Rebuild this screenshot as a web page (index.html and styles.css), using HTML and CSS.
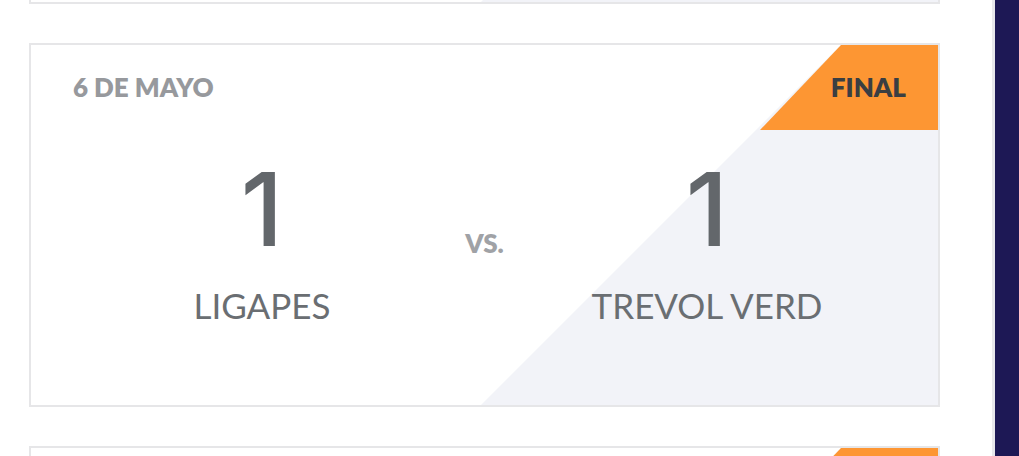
FILE: index.html
```html
<!DOCTYPE html>
<html lang="es">
<head>
<meta charset="utf-8">
<title>Resultados</title>
<link rel="stylesheet" href="styles.css">
</head>
<body>
<div class="page">
  <main class="feed">
    <div class="list">
      <article class="card">
        <div class="badge"><span>FINAL</span></div>
        <div class="date">5 de mayo</div>
        <div class="score">
          <div class="team"><div class="goals">2</div><div class="name">Equipo A</div></div>
          <div class="vs">vs.</div>
          <div class="team"><div class="goals">0</div><div class="name">Equipo B</div></div>
        </div>
      </article>
      <article class="card">
        <div class="badge"><span>FINAL</span></div>
        <div class="date">6 de mayo</div>
        <div class="score">
          <div class="team"><div class="goals">1</div><div class="name">Ligapes</div></div>
          <div class="vs">vs.</div>
          <div class="team"><div class="goals">1</div><div class="name">Trevol Verd</div></div>
        </div>
      </article>
      <article class="card">
        <div class="badge"><span>FINAL</span></div>
        <div class="date">7 de mayo</div>
        <div class="score">
          <div class="team"><div class="goals">3</div><div class="name">Equipo C</div></div>
          <div class="vs">vs.</div>
          <div class="team"><div class="goals">2</div><div class="name">Equipo D</div></div>
        </div>
      </article>
    </div>
  </main>
  <aside class="sidebar"></aside>
</div>
</body>
</html>
```

FILE: styles.css
```css
html, body {
  margin: 0;
  padding: 0;
  height: 100%;
  overflow: hidden;
  background: #ffffff;
  font-family: Lato, "Open Sans", sans-serif;
}

.page {
  display: flex;
  height: 100%;
}

.feed {
  flex: 1;
  padding: 0 52px 0 29px;
  overflow: hidden;
}

.list {
  display: flex;
  flex-direction: column;
  gap: 39px;
  margin-top: -360px;
}

.card {
  position: relative;
  border: 2px solid #e6e6e8;
  background: #ffffff;
  padding: 29px 42px 82px 42px;
  box-sizing: border-box;
  height: 364px;
  flex-shrink: 0;
  overflow: hidden;
}

.card::before {
  content: "";
  position: absolute;
  inset: 0;
  background: #f2f3f8;
  clip-path: polygon(450px 100%, 810px 0, 100% 0, 100% 100%);
}

.badge {
  position: absolute;
  top: 0;
  right: 0;
  width: 178px;
  height: 85px;
  box-sizing: border-box;
  background: #fd9633;
  clip-path: polygon(81px 0, 100% 0, 100% 100%, 0 100%);
  display: flex;
  justify-content: flex-end;
  padding: 29px 32px 0 0;
  font-weight: 800;
  font-size: 26px;
  line-height: 26px;
  color: #3a3e42;
}

.date {
  position: relative;
  font-weight: 800;
  font-size: 26px;
  line-height: 26px;
  color: #97999d;
  text-transform: uppercase;
}

.score {
  position: relative;
  display: grid;
  grid-template-columns: 1fr 67px 1fr;
  margin-top: 56px;
}

.team {
  display: flex;
  flex-direction: column;
  align-items: center;
}

.goals {
  font-family: Inter, Roboto, sans-serif;
  font-size: 102px;
  line-height: 103px;
  font-weight: 500;
  color: #63676b;
  margin-top: 2px;
  margin-bottom: -2px;
}

.name {
  margin-top: 29px;
  font-size: 35px;
  line-height: 35px;
  color: #6a6e72;
  text-transform: uppercase;
  white-space: nowrap;
}

.vs {
  text-align: center;
  padding-top: 74px;
  font-weight: 800;
  font-size: 26px;
  line-height: 26px;
  color: #a0a2a6;
  text-transform: uppercase;
}

.sidebar {
  width: 24px;
  border-left: 3px solid #e8e8ec;
  background: #1d1855;
}
```
